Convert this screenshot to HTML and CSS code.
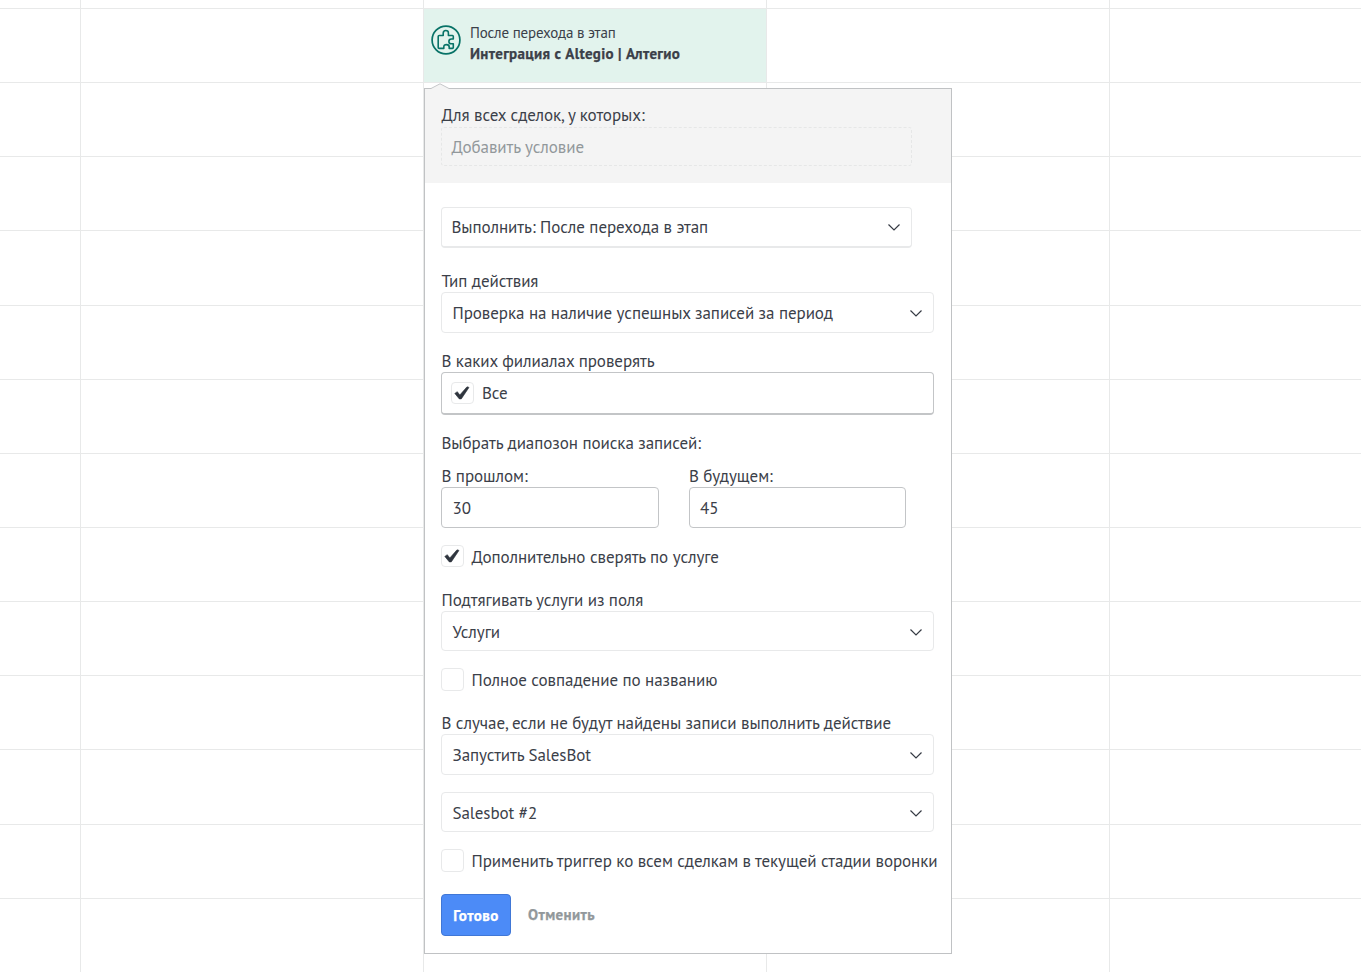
FILE: index.html
```
<!DOCTYPE html>
<html lang="ru">
<head>
<meta charset="utf-8">
<title>Настройка триггера</title>
<link rel="stylesheet" href="styles.css">
</head>
<body>
<svg width="0" height="0" class="defs">
  <symbol id="chevron" viewBox="0 0 14 10"><path d="M1.500 2.500 7 8 12.500 2.500" fill="none" stroke="#363b44" stroke-width="1.200"/></symbol>
  <symbol id="check" viewBox="0 0 16 14"><path d="M.8 7.400 3.300 5.700 5.800 9 13 .8 15 1.400 7.300 12.900 5.300 12.900Z" fill="#2f353e" stroke="#2f353e" stroke-width=".6" stroke-linejoin="round"/></symbol>
</svg>
<main class="board">
  <div class="col"></div>
  <div class="col"></div>
  <div class="col">
    <div class="trigger">
      <svg class="trigger-icon" width="30" height="30" viewBox="0 0 30 30" fill="none" stroke="#087267">
        <circle cx="15" cy="15" r="13.900" stroke-width="1.700"/>
        <path d="M8.200 10.500H12.200V8.200Q12.200 5.500 14.800 5.500T17.400 8.200V10.500H21.400Q22.300 10.500 22.300 11.400V14H20.500Q17.900 14 17.900 16.400T20.500 18.800H22.300V22.400Q22.300 23.400 21.400 23.400H18.200V21.900Q18.200 19.600 15.500 19.600T12.800 21.900V23.400H8.200Q7.200 23.400 7.200 22.400V11.500Q7.200 10.500 8.200 10.500Z" stroke-width="1.600" stroke-linejoin="round"/>
      </svg>
      <div class="trigger-text">
        <div class="trigger-when">После перехода в этап</div>
        <div class="trigger-name">Интеграция с Altegio | Алтегио</div>
      </div>
    </div>
  </div>
  <div class="col"></div>
  <div class="col last"></div>
</main>

<section class="popup">
  <svg class="pointer" width="18" height="6" viewBox="0 0 18 6"><path d="M0 6V5.500L9 .8 18 5.500V6Z" fill="#f4f4f4"/><path d="M0 5.500 9 .8 18 5.500" fill="none" stroke="#c5c7c9"/></svg>
  <header class="conditions">
    <div class="label">Для всех сделок, у которых:</div>
    <div class="add-condition">Добавить условие</div>
  </header>
  <form class="form">
    <div class="select run"><span>Выполнить: После перехода в этап</span><svg class="arrow"><use href="#chevron"/></svg></div>

    <div class="field type">
      <div class="label">Тип действия</div>
      <div class="select tall"><span>Проверка на наличие успешных записей за период</span><svg class="arrow"><use href="#chevron"/></svg></div>
    </div>

    <div class="field branches">
      <div class="label">В каких филиалах проверять</div>
      <div class="branch-box"><span class="box checked"><svg class="tick"><use href="#check"/></svg></span><span>Все</span></div>
    </div>

    <div class="label range-title">Выбрать диапозон поиска записей:</div>
    <div class="range">
      <div><div class="label">В прошлом:</div><div class="input past">30</div></div>
      <div><div class="label">В будущем:</div><div class="input future">45</div></div>
    </div>

    <div class="option by-service"><span class="box checked"><svg class="tick"><use href="#check"/></svg></span><span>Дополнительно сверять по услуге</span></div>

    <div class="field service">
      <div class="label">Подтягивать услуги из поля</div>
      <div class="select"><span>Услуги</span><svg class="arrow"><use href="#chevron"/></svg></div>
    </div>

    <div class="option full-match"><span class="box"></span><span>Полное совпадение по названию</span></div>

    <div class="field otherwise">
      <div class="label">В случае, если не будут найдены записи выполнить действие</div>
      <div class="select tall"><span>Запустить SalesBot</span><svg class="arrow"><use href="#chevron"/></svg></div>
    </div>
    <div class="select bot"><span>Salesbot #2</span><svg class="arrow"><use href="#chevron"/></svg></div>

    <div class="option apply-all"><span class="box"></span><span>Применить триггер ко всем сделкам в текущей стадии воронки</span></div>

    <div class="actions"><span class="done">Готово</span><span class="cancel">Отменить</span></div>
  </form>
</section>
</body>
</html>
```
FILE: styles.css
```
* { box-sizing: border-box; }
body {
  margin: 0;
  position: relative;
  height: 972px;
  overflow: hidden;
  background: #fff;
  color: #3b4049;
  font: 17px/22px "PT Sans", "Open Sans", sans-serif;
  letter-spacing: -0.06px;
  white-space: nowrap;
}
.defs { position: absolute; }

.board {
  display: grid;
  grid-template-columns: 81px 343px 343px 343px 1fr;
  height: 972px;
  padding-top: 8px;
  background: repeating-linear-gradient(#e8e9e9 0 1px, transparent 1px 74.140px) 0 8px no-repeat;
}
.col {
  margin-top: -8px;
  padding-top: 9px;
  border-right: 1px solid #e8e9e9;
}
.col.last { border-right: 0; }

.trigger {
  display: flex;
  gap: 9px;
  height: 73px;
  padding: 13px 7px;
  background: #e2f3ed;
}
.trigger-icon { flex: none; margin-top: 3px; }
.trigger-text { font-size: 15px; line-height: 21px; }
.trigger-when { letter-spacing: -0.19px; }
.trigger-name {
  font-weight: 700;
  letter-spacing: 0.33px;
  -webkit-text-stroke: 0.25px;
}

.popup {
  position: absolute;
  left: 424px;
  top: 88px;
  width: 528px;
  height: 866px;
  border: 1px solid #c0c2c4;
  background: #fff;
}
.pointer { position: absolute; left: 6px; top: -6px; }

.conditions {
  height: 94px;
  padding: 15px 16px 0;
  background: #f4f4f4;
}
.conditions .label { height: 23px; }
.add-condition {
  width: 471px;
  height: 39px;
  padding: 8px 9.500px;
  border: 1px dashed #e6e7e7;
  border-radius: 3px;
  color: #92989b;
}

.form { padding: 24px 16px 0; }
.label { height: 22px; padding-left: 0.500px; }

.select {
  display: flex;
  align-items: center;
  justify-content: space-between;
  width: 493px;
  height: 40px;
  padding: 1px 10px 0 10.500px;
  border: 1px solid #e8e9ea;
  border-radius: 4px;
}
.select.tall { height: 41px; padding-top: 0; }
.select.run {
  width: 471px;
  height: 41px;
  padding: 0 10px 0 9.500px;
  border-bottom-width: 2px;
}
.arrow { width: 14px; height: 10px; }

.type { margin-top: 22px; }
.branches { margin-top: 17px; }
.branch-box {
  display: flex;
  align-items: center;
  gap: 8px;
  width: 493px;
  height: 43px;
  padding-left: 9px;
  border: 1px solid #c3c5c7;
  border-bottom-width: 2px;
  border-radius: 4px;
}
.box {
  display: flex;
  flex: none;
  align-items: center;
  justify-content: center;
  width: 23px;
  height: 23px;
  border: 1px solid #e8e9ea;
  border-radius: 4px;
}
.box.checked { height: 22px; margin-bottom: 1px; padding-right: 1px; }
.tick { width: 16px; height: 14px; }

.range-title { margin-top: 17px; }
.range { display: flex; gap: 30px; margin-top: 11px; }
.input {
  width: 218px;
  height: 41px;
  padding: 9px 10px;
  border: 1px solid #c3c5c7;
  border-radius: 4px;
}
.input.past { padding-left: 10.500px; }
.input.future { width: 217px; }
.range > div + div .label { padding-left: 0; }

.option { display: flex; align-items: center; gap: 7.500px; height: 23px; }
.by-service { margin-top: 17px; }
.service { margin-top: 21px; }
.full-match { margin-top: 17px; }
.otherwise { margin-top: 21px; }
.bot { margin-top: 17px; }
.apply-all { margin-top: 17px; }

.actions {
  display: flex;
  align-items: center;
  gap: 17px;
  margin-top: 22px;
  font-size: 15px;
  font-weight: 700;
  -webkit-text-stroke: 0.25px;
}
.done {
  width: 70px;
  height: 42px;
  padding-top: 10px;
  border: 1px solid #4077d6;
  border-radius: 4px;
  background: #4c8bf7;
  color: #fff;
  letter-spacing: 0.4px;
  text-align: center;
}
.cancel { color: #92989b; letter-spacing: 0.38px; }
```
